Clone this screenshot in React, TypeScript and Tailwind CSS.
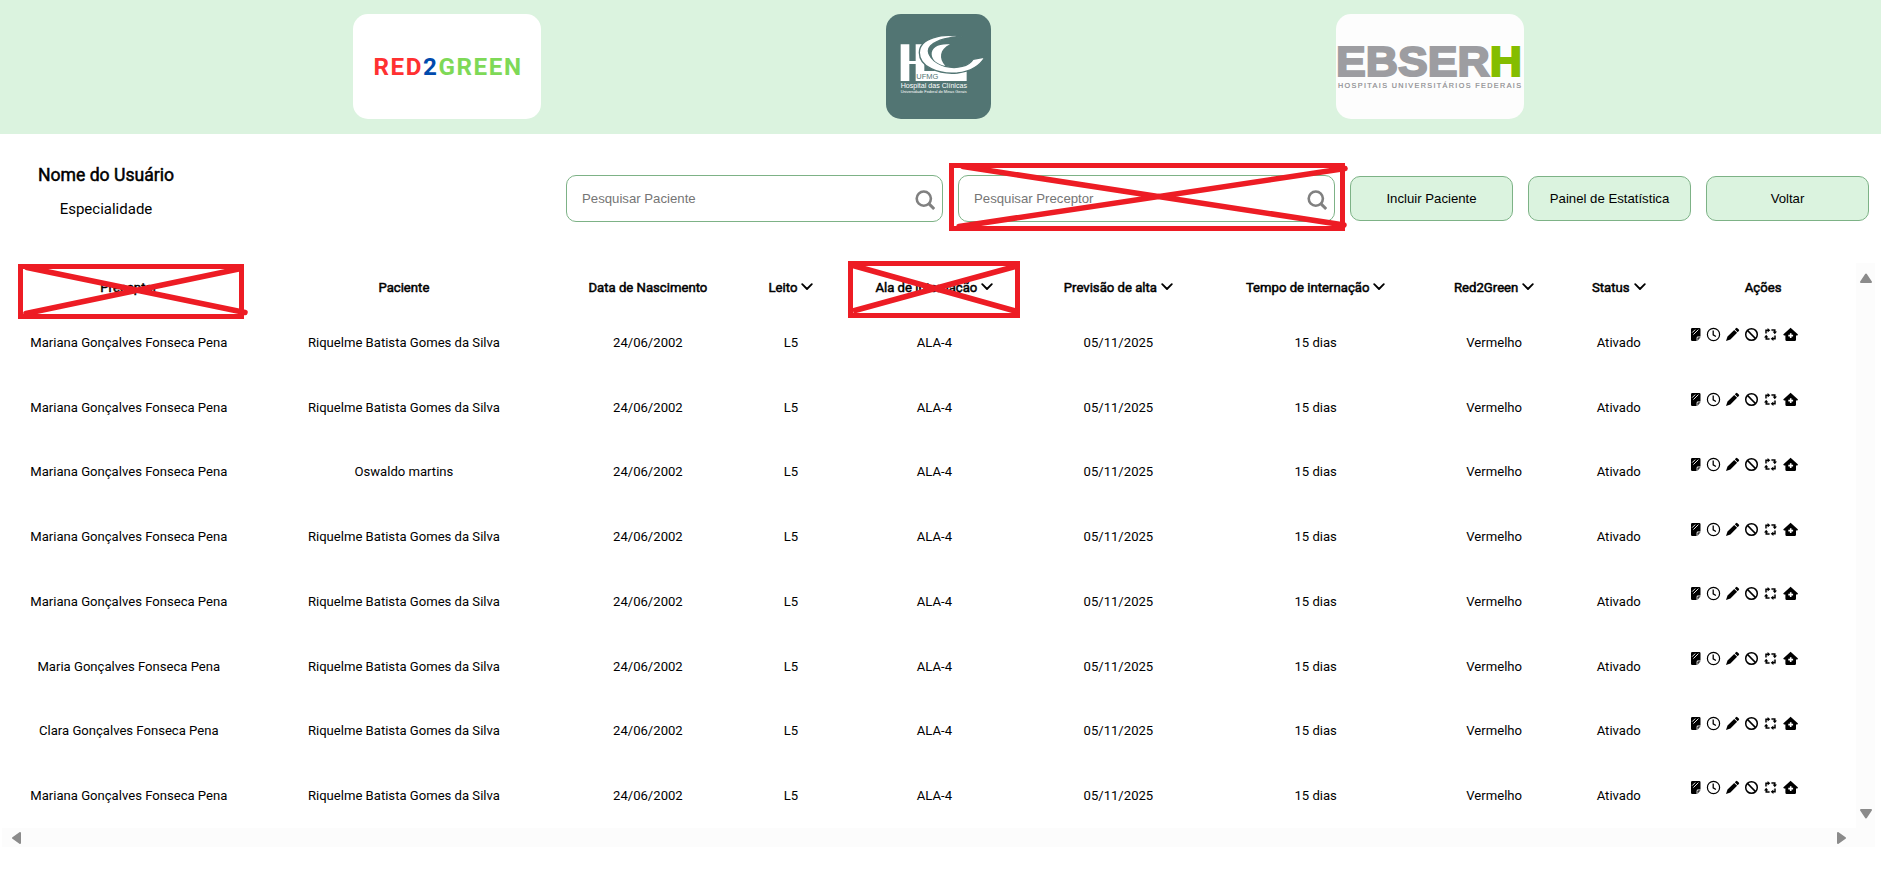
import React from "react";

const RED = "#ed1c24";

const columns: { label: string; sortable?: boolean }[] = [
  { label: "Preceptor" },
  { label: "Paciente" },
  { label: "Data de Nascimento" },
  { label: "Leito", sortable: true },
  { label: "Ala de internação", sortable: true },
  { label: "Previsão de alta", sortable: true },
  { label: "Tempo de internação", sortable: true },
  { label: "Red2Green", sortable: true },
  { label: "Status", sortable: true },
  { label: "Ações" },
];

const people: [string, string][] = [
  ["Mariana Gonçalves Fonseca Pena", "Riquelme Batista Gomes da Silva"],
  ["Mariana Gonçalves Fonseca Pena", "Riquelme Batista Gomes da Silva"],
  ["Mariana Gonçalves Fonseca Pena", "Oswaldo martins"],
  ["Mariana Gonçalves Fonseca Pena", "Riquelme Batista Gomes da Silva"],
  ["Mariana Gonçalves Fonseca Pena", "Riquelme Batista Gomes da Silva"],
  ["Maria Gonçalves Fonseca Pena", "Riquelme Batista Gomes da Silva"],
  ["Clara Gonçalves Fonseca Pena", "Riquelme Batista Gomes da Silva"],
  ["Mariana Gonçalves Fonseca Pena", "Riquelme Batista Gomes da Silva"],
];

const rest = ["24/06/2002", "L5", "ALA-4", "05/11/2025", "15 dias", "Vermelho", "Ativado"];

const gridCols =
  "grid grid-cols-[253.6px_296.6px_191.4px_94.8px_192px_176px_218.6px_138.4px_110.8px_178px]";

function Chevron() {
  return (
    <svg width="12" height="8" viewBox="0 0 12 8" className="-mt-[2px] ml-1 shrink-0" fill="none" stroke="#000" strokeWidth="1.8" strokeLinecap="round" strokeLinejoin="round">
      <path d="M1.2 1.2 6 6l4.8-4.8" />
    </svg>
  );
}

function SearchIcon() {
  return (
    <svg width="20" height="20" viewBox="0 0 20 20" className="mt-[3px] shrink-0" fill="none" stroke="#808080" strokeWidth="2.6">
      <circle cx="8.8" cy="8.6" r="7.1" />
      <path d="M13.8 13.6 19.2 19" strokeWidth="3" />
    </svg>
  );
}

function NoteIcon() {
  return (
    <svg width="15" height="15" viewBox="0 0 15 15">
      <path d="M5.2 1h7.1a1.2 1.2 0 0 1 1.2 1.2V9.500H11A1.400 1.400 0 0 0 9.600 10.900V14H5.200A1.200 1.200 0 0 1 4 12.800V2.200A1.200 1.200 0 0 1 5.200 1Z" fill="#000" />
      <path d="M10.400 13.900V11.200a.9.9 0 0 1 .9-.9H13.600Z" fill="#333" />
      <path d="M5.200 5.600 8.200 2.600M6.400 7.600 11.400 2.600" stroke="#fff" strokeWidth=".9" />
    </svg>
  );
}

function ClockIcon() {
  return (
    <svg width="15" height="15" viewBox="0 0 15 15" fill="none" stroke="#000">
      <circle cx="7.5" cy="7.5" r="6.1" strokeWidth="1.2" />
      <path d="M7.2 3.6V7.8L9.9 9.5" strokeWidth="1.3" />
    </svg>
  );
}

function PencilIcon() {
  return (
    <svg width="15" height="15" viewBox="0 0 15 15" fill="#000">
      <path d="M10.9 1.200a1 1 0 0 1 1.500 0L13.800 2.600a1 1 0 0 1 0 1.500L12.700 5.200 9.800 2.300ZM9.200 2.900 12.100 5.800 5.400 12.500 1 14 2.500 9.600Z" />
    </svg>
  );
}

function BanIcon() {
  return (
    <svg width="15" height="15" viewBox="0 0 15 15" fill="none" stroke="#000" strokeWidth="1.5">
      <circle cx="7.5" cy="7.5" r="5.8" />
      <path d="M3.4 3.4 11.6 11.6" />
    </svg>
  );
}

function CycleIcon() {
  return (
    <svg width="15" height="15" viewBox="0 0 15 15" fill="none" stroke="#000" strokeWidth="1.5">
      <path d="M3 6.600V3.200H5.200M8.400 3H11.800V5.200M12 8.400V11.800H9.800M6.600 12H3.200V9.800" />
      <path d="M4.600 1 7.300 3.200 4.600 5.400ZM14 4.600 11.800 7.300 9.600 4.600ZM10.400 9.600 7.700 11.800 10.400 14ZM1 10.400 3.200 7.700 5.400 10.400Z" fill="#000" stroke="none" />
    </svg>
  );
}

function HouseIcon() {
  return (
    <svg width="16" height="15" viewBox="0 0 16 15" fill="#000">
      <path d="M8.6 .8 16 7.400 15.400 8.400H14V12.800A1 1 0 0 1 13 13.900H4.400A1 1 0 0 1 3.400 12.800V8.400H2L1.200 7.400Z" />
      <path d="M8.700 6.200V11M6.300 8.600H11.100" stroke="#fff" strokeWidth="1.6" />
    </svg>
  );
}

function Hc() {
  return (
    <svg width="105" height="105" viewBox="48 42 315 315" className="block">
      <rect x="48" y="42" width="315" height="315" fill="#527573" />
      <path d="M92 133H118V183H137V133H163V213H290V243H92ZM118 192V243H137V192Z" fill="#fff" fillRule="evenodd" />
      <path d="M276 111C215 97 148 116 148 158C148 200 205 224 262 219C306 214 331 195 345 171L309 178C297 198 262 208 225 199C190 188 162 158 182 137C202 119 240 110 276 111Z" fill="#fff" stroke="#527573" strokeWidth="4" />
      <path d="M240 133C206 130 184 143 185 163C186 181 202 193 226 198C206 176 208 148 240 133Z" fill="#fff" />
      <text x="139" y="238" fontSize="22" fontFamily="'Liberation Sans', sans-serif" fill="#527573" textLength="66" lengthAdjust="spacingAndGlyphs">UFMG</text>
      <text x="92" y="265" fontSize="20" fontFamily="'Liberation Sans', sans-serif" fill="#fff" textLength="199" lengthAdjust="spacingAndGlyphs">Hospital das Clínicas</text>
      <text x="92" y="279" fontSize="11.5" fontFamily="'Liberation Sans', sans-serif" fill="#fff" textLength="198" lengthAdjust="spacingAndGlyphs">Universidade Federal de Minas Gerais</text>
    </svg>
  );
}

function Header() {
  return (
    <header className="flex h-[134px] gap-[345px] bg-[#dbf3df] pt-[14px] pl-[353px]">
      <div className="h-[105px] w-[188px] shrink-0 overflow-hidden rounded-[15px] bg-white">
        <svg width="188" height="105" viewBox="0 0 188 105" className="block">
          <text x="20.5" y="61" fontSize="24.2" fontWeight="700" fontFamily="Roboto, sans-serif" textLength="147.500" lengthAdjust="spacing">
            <tspan fill="#ff3131">RED</tspan>
            <tspan fill="#004aad">2</tspan>
            <tspan fill="#7ed957">GREEN</tspan>
          </text>
        </svg>
      </div>
      <div className="h-[105px] w-[105px] shrink-0 overflow-hidden rounded-[15px]">
        <Hc />
      </div>
      <div className="h-[105px] w-[188px] shrink-0 overflow-hidden rounded-[15px] bg-[#fdfdfd]">
        <svg width="188" height="105" viewBox="0 0 188 105" className="block" fontFamily="'Liberation Sans', sans-serif">
          <text x="0" y="62" fontSize="42" fontWeight="700" strokeWidth="2" textLength="186" lengthAdjust="spacingAndGlyphs">
            <tspan fill="#9d9da1" stroke="#9d9da1">EBSER</tspan>
            <tspan fill="#84bd00" stroke="#84bd00">H</tspan>
          </text>
          <text x="2" y="73.5" fontSize="7.2" fill="#8d8d91" stroke="#8d8d91" strokeWidth=".2" textLength="183">HOSPITAIS UNIVERSITÁRIOS FEDERAIS</text>
        </svg>
      </div>
    </header>
  );
}

function Search({ label }: { label: string }) {
  return (
    <div className="flex h-[47px] w-[377px] items-center justify-between rounded-[10px] border border-[#7db286] bg-white pr-[7px] pl-[15px] font-['Liberation_Sans',sans-serif] text-[13.2px] text-[#757575]">
      <span>{label}</span>
      <SearchIcon />
    </div>
  );
}

function Action({ label }: { label: string }) {
  return (
    <button className="h-[45px] w-[163px] rounded-[10px] border border-[#7db286] bg-[#dbf3df] font-['Liberation_Sans',sans-serif] text-[13.2px] text-black">
      {label}
    </button>
  );
}

const faux = "[-webkit-text-stroke:0.5px_#000]";

export default function App() {
  return (
    <div className="relative h-[872px] w-[1881px] overflow-hidden bg-white font-[Roboto,sans-serif] text-black">
      <Header />
      <section className="flex h-[129px] items-start justify-between pr-3 pl-[38px]">
        <div className="flex w-[136px] flex-col items-center pt-[30px]">
          <div className={`text-[17.6px] leading-[22px] whitespace-nowrap ${faux}`}>Nome do Usuário</div>
          <div className="mt-[14px] text-[15px] leading-[18px]">Especialidade</div>
        </div>
        <div className="mt-[41px] flex h-[47px] items-center gap-[15px]">
          <Search label="Pesquisar Paciente" />
          <Search label="Pesquisar Preceptor" />
          <Action label="Incluir Paciente" />
          <Action label="Painel de Estatística" />
          <Action label="Voltar" />
        </div>
      </section>

      <main className="ml-[2px] flex w-[1873px]">
        <div className="w-[1854px]">
          <div className={`${gridCols} h-[47.4px] items-center pt-[2px] text-[13.15px]`}>
            {columns.map((c) => (
              <div key={c.label} className="flex items-center justify-center whitespace-nowrap">
                <span className={faux}>{c.label}</span>
                {c.sortable && <Chevron />}
              </div>
            ))}
          </div>
          {people.map((p, i) => (
            <div key={i} className={`${gridCols} h-[64.7px] items-center text-center text-[13.1px]`}>
              {[...p, ...rest].map((t, j) => (
                <div key={j} className="pt-[0.4px] whitespace-nowrap">{t}</div>
              ))}
              <div className="flex gap-1 pb-[15.6px] pl-[13px]">
                <NoteIcon />
                <ClockIcon />
                <PencilIcon />
                <BanIcon />
                <CycleIcon />
                <HouseIcon />
              </div>
            </div>
          ))}
          <div className="flex h-[19px] items-center justify-between bg-[#fcfcfc] pt-px pr-[10px] pl-[10px]">
            <svg width="9" height="12" viewBox="0 0 9 12" fill="#8b8b8b" stroke="#8b8b8b" strokeWidth="2" strokeLinejoin="round"><path d="M8 1v10L1 6Z" /></svg>
            <svg width="9" height="12" viewBox="0 0 9 12" fill="#8b8b8b" stroke="#8b8b8b" strokeWidth="2" strokeLinejoin="round"><path d="M1 1v10L8 6Z" /></svg>
          </div>
        </div>
        <div className="flex w-[19px] flex-col items-center justify-between bg-[#fcfcfc] pt-[10px] pb-[28px]">
          <svg width="12" height="10" viewBox="0 0 12 10" fill="#8b8b8b" stroke="#8b8b8b" strokeWidth="2" strokeLinejoin="round"><path d="M1 9h10L6 1.5Z" /></svg>
          <svg width="12" height="10" viewBox="0 0 12 10" fill="#8b8b8b" stroke="#8b8b8b" strokeWidth="2" strokeLinejoin="round"><path d="M1 1h10L6 8.5Z" /></svg>
        </div>
      </main>

      <svg className="pointer-events-none absolute inset-0" width="1881" height="872" viewBox="0 0 1881 872" fill="none" stroke={RED} strokeWidth="5">
        <rect x="20.5" y="266.5" width="221" height="50" />
        <path d="M27 267.500 245 312.500M241 268.500 26 313.500" strokeLinecap="round" strokeWidth="5.500" />
        <rect x="850.5" y="263.5" width="167" height="52" />
        <path d="M853 265.500 1017 311.500M1017 266 853 311" strokeWidth="5.500" />
        <rect x="951.5" y="165.5" width="391" height="63" />
        <path d="M963 166.500 1344 225M1345 168.500 959 226.500" strokeLinecap="round" strokeWidth="5.500" />
      </svg>
    </div>
  );
}
